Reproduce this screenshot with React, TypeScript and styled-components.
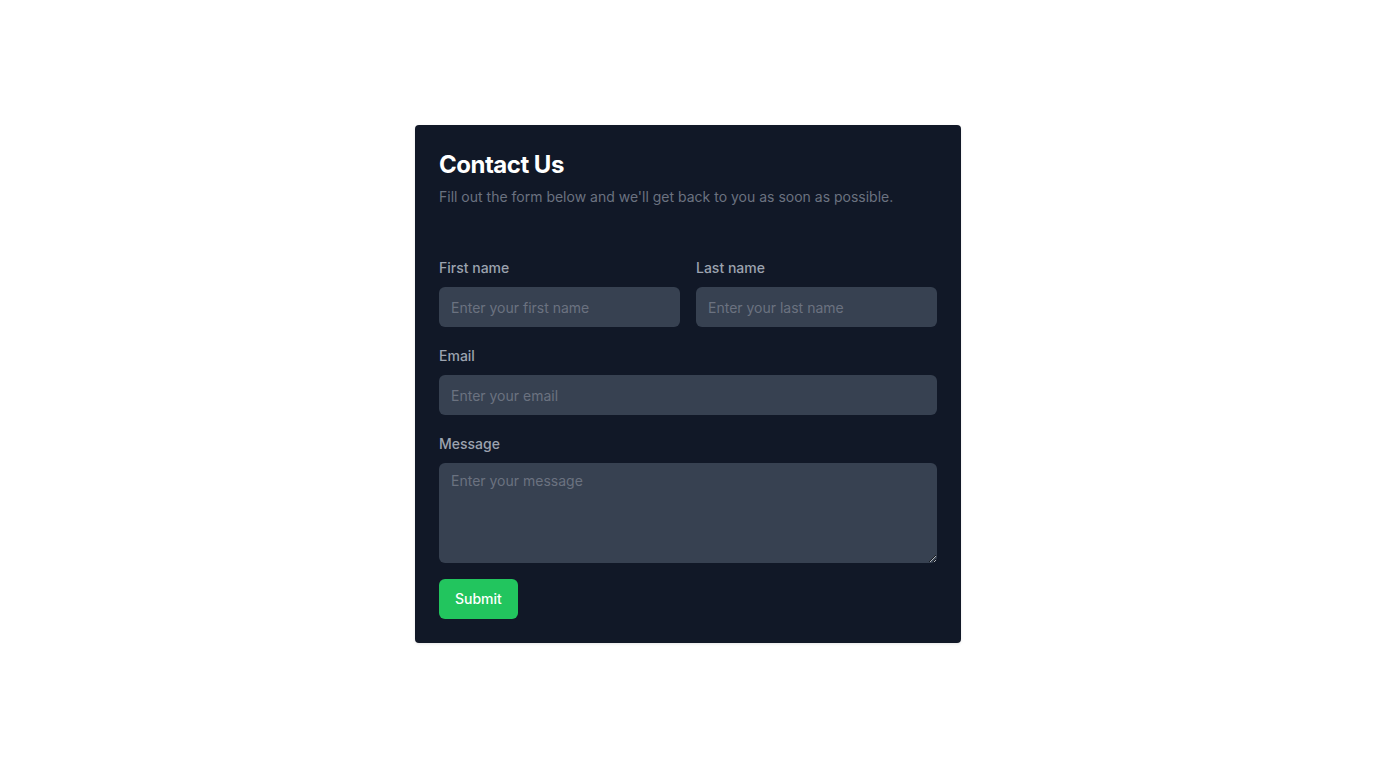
import React from "react";
import styled, { createGlobalStyle } from "styled-components";

const GlobalStyle = createGlobalStyle`
  html, body { margin: 0; padding: 0; background: #ffffff; }
  body { font-family: Inter, "Noto Sans", sans-serif; }
  * { box-sizing: border-box; }
`;

const Page = styled.div`
  width: 1376px;
  height: 768px;
  display: flex;
  align-items: center;
  justify-content: center;
`;

const Card = styled.div`
  width: 546px;
  background: #111827;
  border-radius: 4px;
  padding: 24px;
  box-shadow: 0 1px 3px rgba(0, 0, 0, 0.1);
`;

const Title = styled.h1`
  margin: 0;
  font-size: 24px;
  line-height: 32px;
  font-weight: 700;
  color: #ffffff;
  letter-spacing: -0.5px;
`;

const Subtitle = styled.p`
  margin: 6px 0 0 0;
  font-size: 14px;
  line-height: 20px;
  color: #6b7280;
`;

const Form = styled.form`
  margin-top: 52px;
  display: flex;
  flex-direction: column;
  gap: 20px;
`;

const Row = styled.div`
  display: grid;
  grid-template-columns: 1fr 1fr;
  gap: 16px;
`;

const Field = styled.div`
  display: flex;
  flex-direction: column;
`;

const Label = styled.label`
  font-size: 14px;
  line-height: 18px;
  font-weight: 500;
  color: #9ca3af;
  margin-bottom: 10px;
`;

const Input = styled.input`
  display: block;
  width: 100%;
  height: 40px;
  padding: 0 12px;
  border: none;
  border-radius: 6px;
  background: #374151;
  color: #ffffff;
  font-family: Inter, "Noto Sans", sans-serif;
  font-size: 14px;
  outline: none;
  &::placeholder { color: #6b7280; }
`;

const TextArea = styled.textarea`
  display: block;
  width: 100%;
  height: 100px;
  padding: 8px 12px;
  border: none;
  border-radius: 6px;
  background: #374151;
  color: #ffffff;
  font-family: Inter, "Noto Sans", sans-serif;
  font-size: 14px;
  line-height: 20px;
  outline: none;
  &::placeholder { color: #6b7280; }
`;

const Actions = styled.div`
  margin-top: -4px;
  display: flex;
`;

const Button = styled.button`
  height: 40px;
  padding: 0 16px 1px;
  border: none;
  border-radius: 6px;
  background: #22c55e;
  color: #ffffff;
  font-family: Inter, "Noto Sans", sans-serif;
  font-size: 14px;
  font-weight: 500;
  cursor: pointer;
`;

export default function App() {
  return (
    <>
      <GlobalStyle />
      <Page>
        <Card>
          <Title>Contact Us</Title>
          <Subtitle>Fill out the form below and we'll get back to you as soon as possible.</Subtitle>
          <Form onSubmit={(e) => e.preventDefault()}>
            <Row>
              <Field>
                <Label htmlFor="first">First name</Label>
                <Input id="first" placeholder="Enter your first name" />
              </Field>
              <Field>
                <Label htmlFor="last">Last name</Label>
                <Input id="last" placeholder="Enter your last name" />
              </Field>
            </Row>
            <Field>
              <Label htmlFor="email">Email</Label>
              <Input id="email" type="email" placeholder="Enter your email" />
            </Field>
            <Field>
              <Label htmlFor="msg">Message</Label>
              <TextArea id="msg" placeholder="Enter your message" />
            </Field>
            <Actions>
              <Button type="submit">Submit</Button>
            </Actions>
          </Form>
        </Card>
      </Page>
    </>
  );
}
